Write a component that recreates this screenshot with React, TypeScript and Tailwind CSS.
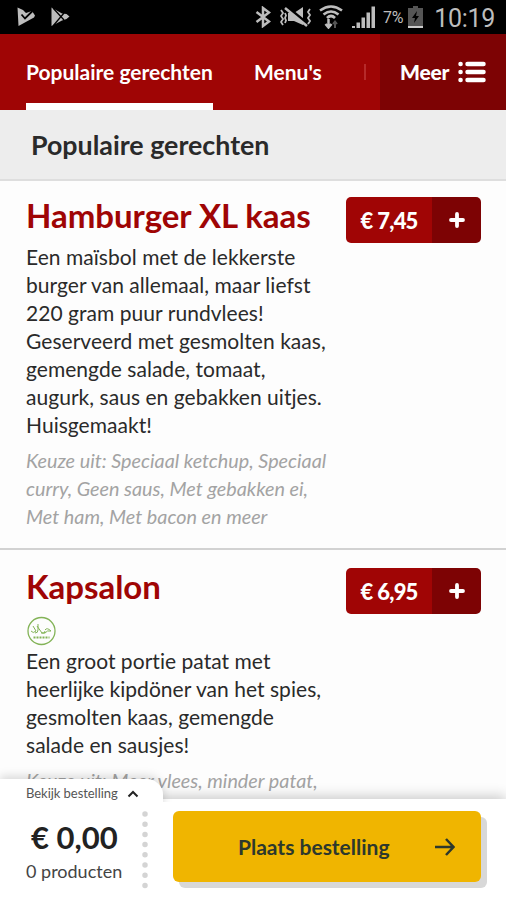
import React from 'react';

const dishes = [
  {
    name: 'Hamburger XL kaas',
    price: '€ 7,45',
    halal: false,
    description: [
      'Een maïsbol met de lekkerste',
      'burger van allemaal, maar liefst',
      '220 gram puur rundvlees!',
      'Geserveerd met gesmolten kaas,',
      'gemengde salade, tomaat,',
      'augurk, saus en gebakken uitjes.',
      'Huisgemaakt!',
    ],
    options: [
      'Keuze uit: Speciaal ketchup, Speciaal',
      'curry, Geen saus, Met gebakken ei,',
      'Met ham, Met bacon en meer',
    ],
  },
  {
    name: 'Kapsalon',
    price: '€ 6,95',
    halal: true,
    description: [
      'Een groot portie patat met',
      'heerlijke kipdöner van het spies,',
      'gesmolten kaas, gemengde',
      'salade en sausjes!',
    ],
    options: ['Keuze uit: Meer vlees, minder patat,'],
  },
];

const StatusBar = () => (
  <div className="flex h-[34px] shrink-0 items-center bg-black pl-[17px] pr-[11px] text-[#bdbdbd]">
    <svg className="h-5 w-[19px]" viewBox="0 0 19 20">
      <path d="M0.5 0.5 6 3 9 6 15 4 18 8.500 17 10.500 1.500 19Z" fill="#bdbdbd" />
      <path d="M4.500 7.500 8 11.500 15.500 4" fill="none" stroke="#000" strokeWidth="1.800" />
    </svg>
    <svg className="ml-[15px] h-5 w-[19px]" viewBox="0 0 19 20">
      <path d="M0.5 0.500 11 6.500 15.500 7 18.500 9.500 15.500 12 11 13.500 0.500 19Z" fill="#bdbdbd" />
      <path d="M2 1 13 13M2 19 13 6" stroke="#000" strokeWidth="1.300" />
    </svg>
    <svg className="ml-auto h-[22px] w-4" viewBox="0 0 16 22">
      <path d="M1.500 6 14 15.500 8 20V2L14 6.500 1.500 16" fill="none" stroke="currentColor" strokeWidth="2.500" />
    </svg>
    <svg className="ml-[9px] h-[22px] w-8" viewBox="0 0 32 22">
      <path d="M8 7H14L23 1V19L14 15H8Z" fill="currentColor" />
      <path d="M7 1 29 19" stroke="#000" strokeWidth="3" />
      <path d="M5 2 27 20" stroke="currentColor" strokeWidth="2.500" />
      <path d="M1 4 3 7 1 10 3 13 1 16 3 19M5 7 6 9.500 5 12 6 14.500 5 17M30 3 28 6 30 9 28 12 30 15 28 18" fill="none" stroke="currentColor" strokeWidth="1.800" />
    </svg>
    <svg className="ml-[7px] h-6 w-6" viewBox="0 0 24 24">
      <path d="M1 5.500Q12-2.500 23 5.500M4.500 9.500Q12 3.500 19.500 9.500M8 13Q12 9 16 13" fill="none" stroke="currentColor" strokeWidth="2.600" />
      <path d="M9.500 14V22M6.500 19 9.500 22.500 12.500 19" fill="none" stroke="currentColor" strokeWidth="2.500" />
      <path d="M16 23V17M14 19 16 16.500 18 19" fill="none" stroke="#555" strokeWidth="2" />
    </svg>
    <svg className="ml-2 h-6 w-6" viewBox="0 0 24 24">
      <path d="M1 21h3v2H1ZM5.500 17.500h3.500v5.500H5.500ZM10.500 12.500h3.500v10.500h-3.500ZM15.500 7.500h3.500v15.500h-3.500ZM20.500 1.500h3.500v21.500h-3.500Z" fill="currentColor" />
    </svg>
    <span className="ml-2 pt-[2px] font-[Roboto] text-[16px] leading-none tracking-[-0.2px]">7%</span>
    <svg className="ml-[5px] h-[22px] w-[15px]" viewBox="0 0 15 22">
      <path d="M5 0h5v2h5v20H0V2h5Z" fill="#555" />
      <path d="M0 20h15v2H0Z" fill="#ccc" />
      <path d="M9 5 4 12h3l-1 5 5-7H8Z" fill="#000" />
    </svg>
    <span className="ml-[11px] pt-[3px] font-[Roboto] text-[25px] leading-none tracking-[-0.3px]">10:19</span>
  </div>
);

const Tabs = () => (
  <nav className="flex h-19 shrink-0 bg-[#9f0505] text-[21px] font-bold text-white">
    <div className="ml-[26px] flex w-[187px] items-center border-b-[7px] border-white pt-[7px]">
      <span className="whitespace-nowrap">Populaire gerechten</span>
    </div>
    <div className="ml-[41px] flex items-center">Menu's</div>
    <div className="ml-auto mr-[14px] flex items-center">
      <div className="h-4 w-[2px] bg-[#b62a2a]" />
    </div>
    <div className="flex w-[126px] items-center bg-[#7d0304] pl-5">
      <span className="w-[50px] font-black tracking-[-0.2px]">Meer</span>
      <svg className="ml-2 h-[22px] w-7" viewBox="0 0 28 22" stroke="#fff" strokeWidth="4.500" strokeLinecap="round">
        <path d="M2.500 3h.1M2.500 11h.1M2.500 19h.1M9.500 3h16M9.500 11h16M9.500 19h16" />
      </svg>
    </div>
  </nav>
);

const HalalBadge = () => (
  <svg className="mb-[-7px] mt-[10px] h-[30px] w-[30px]" viewBox="0 0 30 30" fill="none" stroke="#83b357">
    <circle cx="15.500" cy="15" r="13.500" strokeWidth="1.300" />
    <path d="M5 15q2 3 5 0l-3-5M9 17q3 0 3-3V8M11 10l5 7q3 1 3-2M19 14q2-3 6 1-4-1-6 2h-4" />
    <path d="M7.500 21.500h16" strokeWidth="1.800" strokeDasharray="2 1" />
  </svg>
);

const Dish = ({ dish }: { dish: typeof dishes[0] }) => (
  <article className="flex items-start justify-between border-b-2 border-[#d2d2d2] pb-[18px] pl-[26px] pr-[25px] pt-4 first:pt-[14px]">
    <div className="whitespace-nowrap">
      <h2 className="text-[33px] font-bold leading-[40px] tracking-[-0.03px] text-[#9f0505]">{dish.name}</h2>
      {dish.halal && <HalalBadge />}
      <p className="mt-2 text-[21px] leading-[28px] tracking-[0.04px] text-[#2a2a2a]">
        {dish.description.map((line) => (
          <span key={line} className="block">{line}</span>
        ))}
      </p>
      <p className="mt-[7px] text-[19.8px] italic leading-[28px] text-[#a3a3a3]">
        {dish.options.map((line) => (
          <span key={line} className="block">{line}</span>
        ))}
      </p>
    </div>
    <button className="mt-[2px] flex h-[46px] w-[135px] shrink-0 overflow-hidden rounded-[5px] text-white">
      <span className="flex h-full w-[86px] items-center justify-center bg-[#a00505] text-[22px] font-black tracking-[-0.8px] [word-spacing:0.5px]">
        {dish.price}
      </span>
      <span className="flex h-full flex-1 items-center justify-center bg-[#7d0304]">
        <svg className="h-4 w-4" viewBox="0 0 16 16">
          <path d="M8 2v12M2 8h12" stroke="#fff" strokeWidth="3.800" strokeLinecap="round" />
        </svg>
      </span>
    </button>
  </article>
);

const OrderBar = () => (
  <footer className="absolute inset-x-0 bottom-0">
    {/* the tab sits on top of the bar, its shadow is cut off at the seam */}
    <div className="relative z-10 -mb-[3px] h-[23px] w-[183px] [clip-path:inset(-20px_0_0_0)]">
      <div className="flex h-[40px] w-[163px] items-start rounded-tr-[16px] bg-white pl-[26px] pt-[5px] text-[13px] leading-[18px] tracking-[-0.05px] text-[#555] shadow-[0_-3px_10px_rgba(0,0,0,0.15)]">
        <span className="whitespace-nowrap">Bekijk bestelling</span>
        <svg className="ml-[9px] mt-[6px] h-[8px] w-3" viewBox="0 0 12 8">
          <path d="M1.500 6.500 6 2l4.500 4.500" fill="none" stroke="#222" strokeWidth="2" />
        </svg>
      </div>
    </div>
    <div className="flex h-[101px] bg-white shadow-[0_-3px_12px_rgba(0,0,0,0.2)] [clip-path:polygon(0_0,163px_0,163px_-20px,506px_-20px,506px_101px,0_101px)]">
      <div className="w-[142px] pl-[26px] pt-[19px] text-[#222]">
        <div className="pl-[5px] text-[31px] font-bold leading-[38px]">€ 0,00</div>
        <div className="whitespace-nowrap text-[18px] leading-[30px] text-[#444]">0 producten</div>
      </div>
      <svg className="mt-3 h-[80px] w-[6px]" viewBox="0 0 6 80">
        <path d="M3 3V78" stroke="#d4d4d4" strokeWidth="5.500" strokeLinecap="round" strokeDasharray="0 10.200" />
      </svg>
      <button className="ml-[25px] mt-3 flex h-[71px] w-[308px] items-center rounded-md bg-[#f0b500] pl-[65px] pr-[26px] text-[21px] font-bold text-[#2d382d] shadow-[6px_6px_0_#d8d8d8]">
        <span className="whitespace-nowrap">Plaats bestelling</span>
        <svg className="ml-auto h-[18px] w-5" viewBox="0 0 20 18">
          <path d="M0 9h18M11 1l7.500 8L11 17" fill="none" stroke="#2d382d" strokeWidth="2.500" />
        </svg>
      </button>
    </div>
  </footer>
);

const App = () => {
  return (
    <div className="relative flex h-[900px] w-[506px] flex-col overflow-hidden bg-[#fdfdfd] font-[Lato,sans-serif]">
      <StatusBar />
      <Tabs />
      <header className="flex h-[71px] shrink-0 items-center border-b-2 border-[#dedede] bg-[#ededed] pl-[31px] pt-[2px] text-[26.8px] font-bold text-[#2a2a2a]">
        Populaire gerechten
      </header>
      <main>
        {dishes.map((dish) => (
          <Dish key={dish.name} dish={dish} />
        ))}
      </main>
      <OrderBar />
    </div>
  );
};

export default App;
